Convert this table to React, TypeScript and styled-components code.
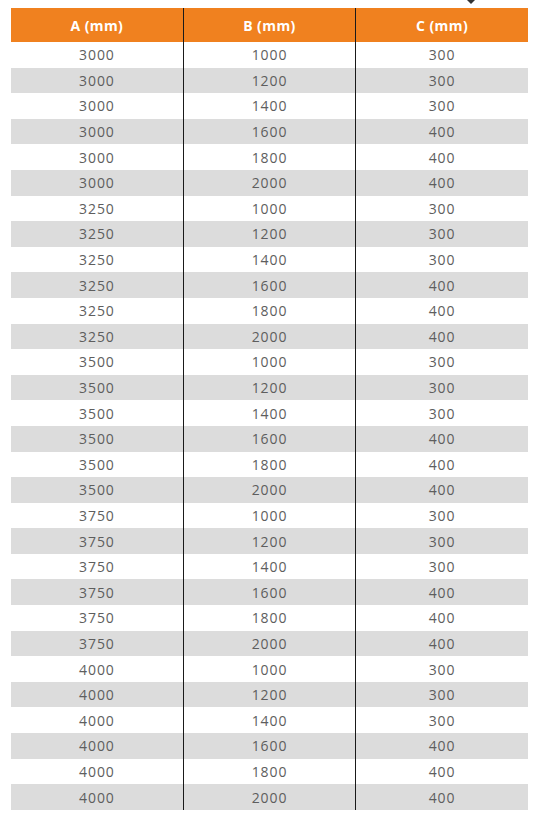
import React from "react";
import styled, { createGlobalStyle } from "styled-components";

const Global = createGlobalStyle`
  html, body { margin: 0; padding: 0; background: #fff; }
  body { font-family: "Open Sans", "Liberation Sans", sans-serif; }
`;

const Page = styled.div`
  position: relative;
  padding: 8px 10px 0 11px;
`;

const Pointer = styled.div`
  position: absolute;
  top: 0;
  left: 467px;
  width: 0;
  height: 0;
  border-left: 4px solid transparent;
  border-right: 4px solid transparent;
  border-top: 4px solid #333;
`;

const Table = styled.table`
  width: 517px;
  border-collapse: collapse;
  table-layout: fixed;
`;

const Head = styled.th<{ $first?: boolean }>`
  background: #f0811f;
  color: #fff;
  font-weight: 700;
  font-size: 14px;
  letter-spacing: 0.4px;
  height: 34px;
  padding: 0;
  text-align: center;
  border-left: ${(p) => (p.$first ? "none" : "1px solid #1a1a1a")};
`;

const Row = styled.tr<{ $alt: boolean }>`
  background: ${(p) => (p.$alt ? "#dcdcdc" : "#ffffff")};
`;

const Cell = styled.td<{ $first?: boolean }>`
  height: 25.6px;
  padding: 0;
  text-align: center;
  color: #5e5e5e;
  font-size: 14px;
  font-weight: 400;
  letter-spacing: 0.9px;
  border-left: ${(p) => (p.$first ? "none" : "1px solid #1a1a1a")};
`;

const rows: [number, number, number][] = [];
[3000, 3250, 3500, 3750, 4000].forEach((a) => {
  [1000, 1200, 1400, 1600, 1800, 2000].forEach((b) => {
    rows.push([a, b, b >= 1600 ? 400 : 300]);
  });
});

export default function App() {
  return (
    <>
      <Global />
      <Page>
        <Pointer />
        <Table>
          <thead>
            <tr>
              <Head $first>A (mm)</Head>
              <Head>B (mm)</Head>
              <Head>C (mm)</Head>
            </tr>
          </thead>
          <tbody>
            {rows.map((r, i) => (
              <Row key={i} $alt={i % 2 === 1}>
                <Cell $first>{r[0]}</Cell>
                <Cell>{r[1]}</Cell>
                <Cell>{r[2]}</Cell>
              </Row>
            ))}
          </tbody>
        </Table>
      </Page>
    </>
  );
}
